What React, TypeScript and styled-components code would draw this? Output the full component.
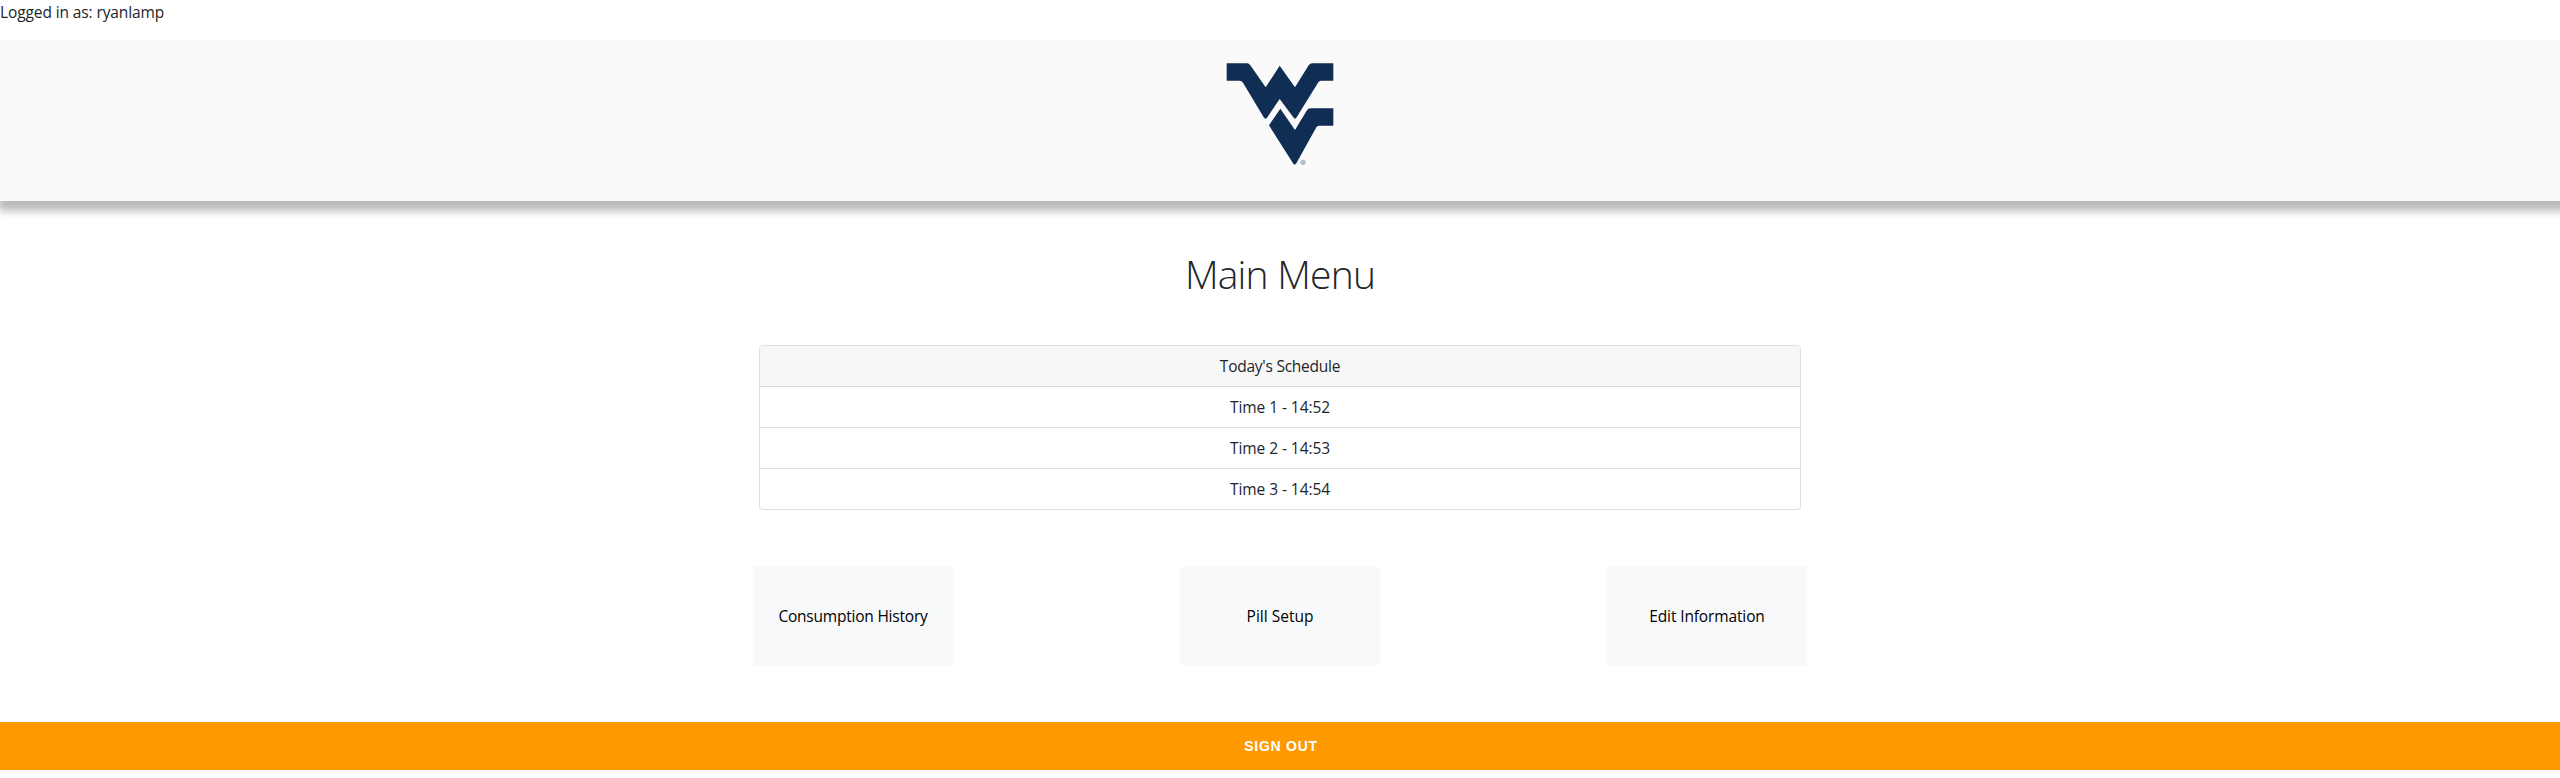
import React from 'react';
import styled, { createGlobalStyle } from 'styled-components';

const GlobalStyle = createGlobalStyle`
  *, *::before, *::after { box-sizing: border-box; }
  html { overflow: hidden; }
  body {
    margin: 0;
    background: #fff;
    color: #212529;
    font: 400 15.5px/24px "Open Sans", "Noto Sans", sans-serif;
  }
`;

const Page = styled.div`
  display: flex;
  flex-direction: column;
  height: 778px;
  overflow: hidden;
`;

const LoginStatus = styled.div`
  height: 40px;
  letter-spacing: -0.11px;
`;

const Header = styled.header`
  display: flex;
  flex: none;
  justify-content: center;
  height: 161px;
  padding-top: 22px;
  background: #fafafa;
  box-shadow: 3px 5px 8px 5px #bbb;
  clip-path: inset(0 0 -30px 0);
`;

const Logo = styled.svg`
  width: 110px;
  height: 105px;
`;

const Title = styled.h1`
  margin: 49px 0 0;
  text-align: center;
  font-size: 39px;
  font-weight: 300;
  line-height: 48px;
  letter-spacing: -0.8px;
`;

const Card = styled.section`
  align-self: center;
  width: 1042px;
  margin-top: 47px;
  border: 1px solid #dfdfdf;
  border-radius: 4px;
  text-align: center;
  overflow: hidden;
`;

const CardHeader = styled.div`
  height: 41px;
  padding-top: 8px;
  background: #f7f7f7;
  border-bottom: 1px solid #d8d8d8;
  letter-spacing: -0.25px;
`;

const Slot = styled.div`
  height: 41px;
  padding-top: 8px;
  letter-spacing: -0.06px;
  border-bottom: 1px solid #dfdfdf;

  &:last-child {
    height: 40px;
    border-bottom: 0;
  }
`;

const Actions = styled.nav`
  display: flex;
  align-self: center;
  justify-content: space-between;
  width: 1054px;
  margin-top: 56px;
`;

const ActionButton = styled.button<{ $tracking: number }>`
  width: 200px;
  height: 100px;
  padding: 0;
  border: 0;
  border-radius: 4px;
  background: #f8f9fa;
  color: #000;
  font: inherit;
  letter-spacing: ${(p) => p.$tracking}px;
`;

const SignOut = styled.button`
  width: 100%;
  height: 48px;
  margin-top: 56px;
  padding: 0 0 0 2px;
  border: 0;
  background: #ff9900;
  color: #fff;
  font: 700 14px/20px "Liberation Sans", Arial, sans-serif;
  letter-spacing: 0.75px;
`;

const times = ['14:52', '14:53', '14:54'];

const actions = [
  { label: 'Consumption History', tracking: -0.22 },
  { label: 'Pill Setup', tracking: 0 },
  { label: 'Edit Information', tracking: -0.13 },
];

export default function App() {
  return (
    <>
      <GlobalStyle />
      <Page>
        <LoginStatus>Logged in as: ryanlamp</LoginStatus>
        <Header>
          <Logo viewBox="75 66 330 315" role="img" aria-label="WV">
            <g fill="#102d53">
              <path d="M80 70H141Q147 70 151 76L197 142L239 77L285 142L326 76Q330 70 337 70H400V122H363Q358 122 355 127L289 233Q285 238 281 233L239 177L201 233Q197 238 192 233L129 128Q125 122 119 122H80Z" />
              <path d="M241 206L285 270L320 212Q324 205 332 205H400V257H357Q352 257 349 262L289 370Q284 377 280 371L207 256Z" />
            </g>
            <circle cx="309" cy="367" r="8" fill="#b8bdc8" />
          </Logo>
        </Header>
        <Title>Main Menu</Title>
        <Card>
          <CardHeader>Today's Schedule</CardHeader>
          {times.map((time, i) => (
            <Slot key={time}>
              Time {i + 1} - {time}
            </Slot>
          ))}
        </Card>
        <Actions>
          {actions.map(({ label, tracking }) => (
            <ActionButton key={label} $tracking={tracking}>
              {label}
            </ActionButton>
          ))}
        </Actions>
        <SignOut>SIGN OUT</SignOut>
      </Page>
    </>
  );
}
